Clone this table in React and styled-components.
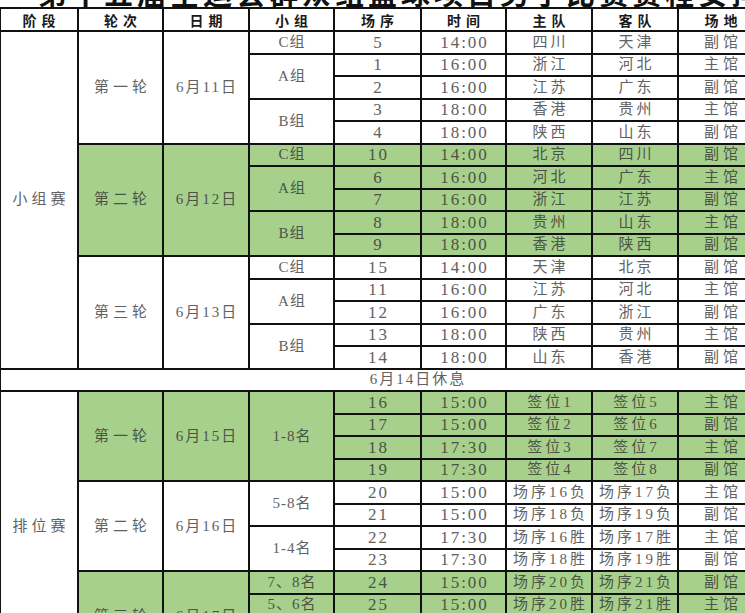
import React from 'react'
import styled, { createGlobalStyle } from 'styled-components'

const GlobalStyle = createGlobalStyle`
  body {
    margin: 0;
    background: #fff;
    overflow: hidden;
  }
`;

const GREEN = '#a8d08d';

const groupStage = [
  {
    round: '第一轮', date: '6月11日', green: false,
    groups: [
      { name: 'C组', games: [['5', '14:00', '四川', '天津', '副馆']] },
      { name: 'A组', games: [['1', '16:00', '浙江', '河北', '主馆'], ['2', '16:00', '江苏', '广东', '副馆']] },
      { name: 'B组', games: [['3', '18:00', '香港', '贵州', '主馆'], ['4', '18:00', '陕西', '山东', '副馆']] }
    ]
  },
  {
    round: '第二轮', date: '6月12日', green: true,
    groups: [
      { name: 'C组', games: [['10', '14:00', '北京', '四川', '副馆']] },
      { name: 'A组', games: [['6', '16:00', '河北', '广东', '主馆'], ['7', '16:00', '浙江', '江苏', '副馆']] },
      { name: 'B组', games: [['8', '18:00', '贵州', '山东', '主馆'], ['9', '18:00', '香港', '陕西', '副馆']] }
    ]
  },
  {
    round: '第三轮', date: '6月13日', green: false,
    groups: [
      { name: 'C组', games: [['15', '14:00', '天津', '北京', '副馆']] },
      { name: 'A组', games: [['11', '16:00', '江苏', '河北', '主馆'], ['12', '16:00', '广东', '浙江', '副馆']] },
      { name: 'B组', games: [['13', '18:00', '陕西', '贵州', '主馆'], ['14', '18:00', '山东', '香港', '副馆']] }
    ]
  }
];

const rankingStage = [
  {
    round: '第一轮', date: '6月15日', green: true,
    groups: [
      {
        name: '1-8名', games: [
          ['16', '15:00', '签位1', '签位5', '主馆'],
          ['17', '15:00', '签位2', '签位6', '副馆'],
          ['18', '17:30', '签位3', '签位7', '主馆'],
          ['19', '17:30', '签位4', '签位8', '副馆']
        ]
      }
    ]
  },
  {
    round: '第二轮', date: '6月16日', green: false,
    groups: [
      { name: '5-8名', games: [['20', '15:00', '场序16负', '场序17负', '主馆'], ['21', '15:00', '场序18负', '场序19负', '副馆']] },
      { name: '1-4名', games: [['22', '17:30', '场序16胜', '场序17胜', '主馆'], ['23', '17:30', '场序18胜', '场序19胜', '副馆']] }
    ]
  },
  {
    round: '第三轮', date: '6月17日', green: true,
    groups: [
      { name: '7、8名', games: [['24', '15:00', '场序20负', '场序21负', '副馆']] },
      { name: '5、6名', games: [['25', '15:00', '场序20胜', '场序21胜', '主馆']] },
      { name: '3、4名', games: [['26', '17:30', '场序22负', '场序23负', '副馆']] },
      { name: '1、2名', games: [['27', '17:30', '场序22胜', '场序23胜', '主馆']] }
    ]
  }
];

const widths = [78, 85, 86, 85, 87, 85, 86, 86, 86, 72];
const headers = ['阶段', '轮次', '日期', '小组', '场序', '时间', '主队', '客队', '场地', ''];

function countGames(rounds) {
  return rounds.reduce((n, r) => n + r.groups.reduce((m, g) => m + g.games.length, 0), 0);
}

function StageRows({ stage, rounds }) {
  const rows = [];
  const total = countGames(rounds);
  rounds.forEach((r, ri) => {
    const roundSize = r.groups.reduce((m, g) => m + g.games.length, 0);
    r.groups.forEach((g, gi) => {
      g.games.forEach((game, i) => {
        const first = ri === 0 && gi === 0 && i === 0;
        rows.push(
          <Row key={game[0]}>
            {first && <Cell rowSpan={total}>{stage}</Cell>}
            {gi === 0 && i === 0 && <Cell $green={r.green} rowSpan={roundSize}>{r.round}</Cell>}
            {gi === 0 && i === 0 && <Cell $green={r.green} rowSpan={roundSize} $kind='date'>{r.date}</Cell>}
            {i === 0 && <Cell $green={r.green} rowSpan={g.games.length} $kind='group'>{g.name}</Cell>}
            <Cell $green={r.green} $kind='num'>{game[0]}</Cell>
            <Cell $green={r.green} $kind='num'>{game[1]}</Cell>
            <Cell $green={r.green} $kind='team'>{game[2]}</Cell>
            <Cell $green={r.green} $kind='team'>{game[3]}</Cell>
            <Cell $green={r.green}>{game[4]}</Cell>
            <Cell $green={r.green} />
          </Row>
        );
      });
    });
  });
  return rows;
}

function App() {
  return (
    <Page>
      <GlobalStyle />
      <TitleBar>
        <Title>第十五届全运会群众组篮球项目男子比赛赛程安排表</Title>
      </TitleBar>
      <Table>
        <colgroup>
          {widths.map((w, i) => <col key={i} style={{ width: w }} />)}
        </colgroup>
        <thead>
          <HeadRow>
            {headers.map((h, i) => <HeadCell key={i}>{h}</HeadCell>)}
          </HeadRow>
        </thead>
        <tbody>
          <StageRows stage='小组赛' rounds={groupStage} />
          <Row>
            <RestCell colSpan={10}>6月14日休息</RestCell>
          </Row>
          <StageRows stage='排位赛' rounds={rankingStage} />
        </tbody>
      </Table>
    </Page>
  )
}

const spacing = {
  num: '2px',
  date: '2px',
  group: '1px',
  team: '3px'
};

const Page = styled('div')`
  width: 836px;
  font-family: "Liberation Serif", "Noto Sans CJK SC", serif;
`;

const TitleBar = styled('div')`
  height: 7px;
  overflow: hidden;
  display: flex;
  align-items: flex-end;
`;

const Title = styled('div')`
  flex: none;
  padding-left: 38px;
  font-family: "Noto Sans CJK SC", sans-serif;
  font-size: 29px;
  line-height: 29px;
  font-weight: 700;
  letter-spacing: 4px;
  color: #111;
  white-space: nowrap;
`;

const Table = styled('table')`
  border-collapse: collapse;
  table-layout: fixed;
  width: 836px;
  margin-left: -1px;
  border-top: 2px solid #111;
`;

const HeadRow = styled('tr')`
  height: 23px;
`;

const HeadCell = styled('th')`
  padding: 0;
  border: 2px solid #111;
  font-family: "Noto Sans CJK SC", sans-serif;
  font-size: 14px;
  line-height: 1;
  font-weight: 700;
  letter-spacing: 5px;
  text-indent: 5px;
  color: #1a1a1a;
  text-align: center;
  white-space: nowrap;
`;

const Row = styled('tr')`
  height: 22.5px;
`;

const Cell = styled('td')`
  padding: 0;
  border: 2px solid #111;
  background: ${p => (p.$green ? GREEN : '#fff')};
  color: ${p => (p.$green ? '#4a5543' : '#626262')};
  font-size: ${p => (p.$kind === 'num' ? '17px' : '15px')};
  line-height: 1;
  letter-spacing: ${p => spacing[p.$kind] || '4px'};
  text-indent: ${p => spacing[p.$kind] || '4px'};
  text-align: center;
  white-space: nowrap;
  overflow: hidden;
`;

const RestCell = styled('td')`
  padding: 0;
  border: 2px solid #111;
  background: #fff;
  color: #626262;
  font-size: 15px;
  line-height: 1;
  letter-spacing: 2px;
  text-align: center;
`;

export default App
